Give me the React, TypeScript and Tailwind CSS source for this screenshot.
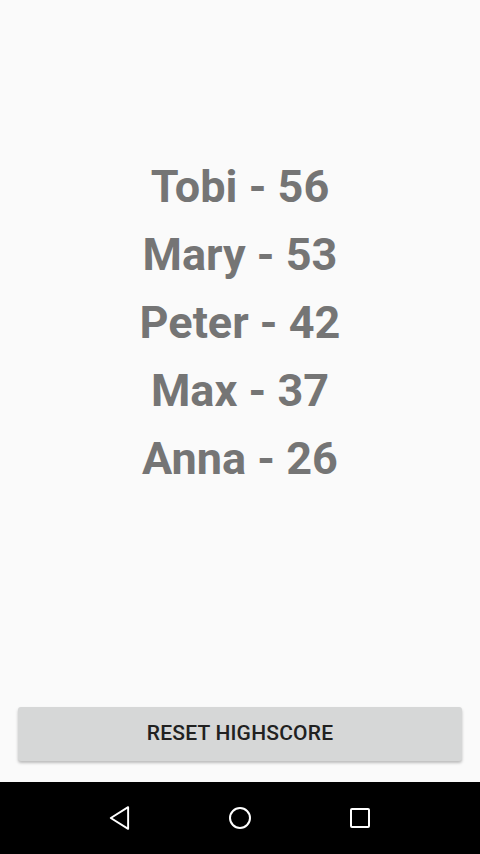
const scores = [
  { name: "Tobi", score: 56 },
  { name: "Mary", score: 53 },
  { name: "Peter", score: 42 },
  { name: "Max", score: 37 },
  { name: "Anna", score: 26 },
];

export default function App() {
  return (
    <div className="w-[480px] h-[854px] flex flex-col bg-[#fafafa] font-['Roboto',sans-serif]">
      <div className="flex-1 flex flex-col">
        <div className="pt-[153px] flex flex-col items-center">
          {scores.map((s) => (
            <div key={s.name} className="h-[68px] leading-[68px] text-[45px] font-bold text-[#757575]">
              {s.name} - {s.score}
            </div>
          ))}
        </div>
        <div className="flex-1" />
        <div className="px-[18px] pb-[21px]">
          <button className="w-full h-[54px] rounded-[3px] bg-[#d6d7d7] shadow-[0_2px_3px_rgba(0,0,0,0.25)] text-[21px] font-medium text-[#212121] tracking-[0.2px]">
            RESET HIGHSCORE
          </button>
        </div>
      </div>
      <div className="h-[72px] bg-black flex items-center justify-around px-[60px]">
        <div className="w-[120px] flex justify-center">
          <svg width="26" height="26" viewBox="0 0 24 24" fill="none" stroke="white" strokeWidth="1.8" strokeLinejoin="round">
            <path d="M19.5 2 L3.5 12 L19.5 22 Z" />
          </svg>
        </div>
        <div className="w-[120px] flex justify-center">
          <svg width="24" height="24" viewBox="0 0 24 24" fill="none" stroke="white" strokeWidth="2">
            <circle cx="12" cy="12" r="10" />
          </svg>
        </div>
        <div className="w-[120px] flex justify-center">
          <svg width="24" height="24" viewBox="0 0 24 24" fill="none" stroke="white" strokeWidth="2">
            <rect x="3" y="3" width="18" height="18" rx="1" />
          </svg>
        </div>
      </div>
    </div>
  );
}
